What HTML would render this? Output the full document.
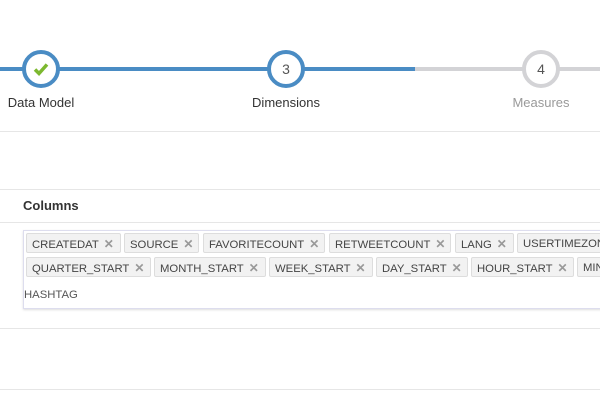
<!DOCTYPE html>
<html><head><style>
body{margin:0;width:600px;height:400px;background:#fff;font-family:"Liberation Sans",sans-serif;position:relative;overflow:hidden}
.a{position:absolute}
.hr{position:absolute;left:0;width:600px;height:1px;background:#e6e6e6}
.c{position:absolute;width:30px;height:30px;border-radius:50%;border:4px solid #4a8cc4;background:#fff;text-align:center;line-height:30px;font-size:14px;color:#555}
.lbl{position:absolute;font-size:13px;color:#333;top:95px;transform:translateX(-50%)}
.tag{position:absolute;height:20px;line-height:20px;background:#f2f2f2;border:1px solid #ddd;border-radius:2px;font-size:11.3px;color:#444;padding-left:5px;box-sizing:border-box;white-space:nowrap;overflow:hidden}
.tag b{color:#999;font-weight:bold;font-size:12px;margin-left:5px}
</style></head><body>
<div class="a" style="left:0;top:67px;width:415px;height:4px;background:#4a8cc4"></div>
<div class="a" style="left:415px;top:67px;width:185px;height:4px;background:#d3d3d6"></div>
<div class="c" style="left:22px;top:50px"><svg width="30" height="30" viewBox="0 0 30 30" style="display:block"><path d="M9 15.5l4 4 8-9" stroke="#7cb82f" stroke-width="3.5" fill="none"/></svg></div>
<div class="c" style="left:267px;top:50px">3</div>
<div class="c" style="left:522px;top:50px;border-color:#d3d3d6">4</div>
<div class="lbl" style="left:41px">Data Model</div>
<div class="lbl" style="left:286px">Dimensions</div>
<div class="lbl" style="left:541px;color:#999">Measures</div>
<div class="hr" style="top:131px"></div>
<div class="hr" style="top:189px"></div>
<div class="a" style="left:23px;top:198px;font-size:13px;font-weight:bold;color:#333">Columns</div>
<div class="hr" style="top:222px"></div>
<div class="a" style="left:23px;top:230px;width:600px;height:77px;border:1px solid #dde;border-right:none;box-shadow:0 1px 2px #ddd"></div>
<div class="tag" style="left:26px;top:233px;width:95px">CREATEDAT<b>✕</b></div>
<div class="tag" style="left:124px;top:233px;width:75px">SOURCE<b>✕</b></div>
<div class="tag" style="left:203px;top:233px;width:122px">FAVORITECOUNT<b>✕</b></div>
<div class="tag" style="left:329px;top:233px;width:122px">RETWEETCOUNT<b>✕</b></div>
<div class="tag" style="left:455px;top:233px;width:59px">LANG<b>✕</b></div>
<div class="tag" style="left:517px;top:233px;width:90px">USERTIMEZONE</div>
<div class="tag" style="left:26px;top:257px;width:125px">QUARTER_START<b>✕</b></div>
<div class="tag" style="left:154px;top:257px;width:112px">MONTH_START<b>✕</b></div>
<div class="tag" style="left:269px;top:257px;width:104px">WEEK_START<b>✕</b></div>
<div class="tag" style="left:376px;top:257px;width:92px">DAY_START<b>✕</b></div>
<div class="tag" style="left:471px;top:257px;width:103px">HOUR_START<b>✕</b></div>
<div class="tag" style="left:577px;top:257px;width:40px">MINUTE</div>
<div class="a" style="left:24px;top:289px;font-size:11.3px;color:#555">HASHTAG</div>
<div class="hr" style="top:328px"></div>
<div class="hr" style="top:389px"></div>
</body></html>
